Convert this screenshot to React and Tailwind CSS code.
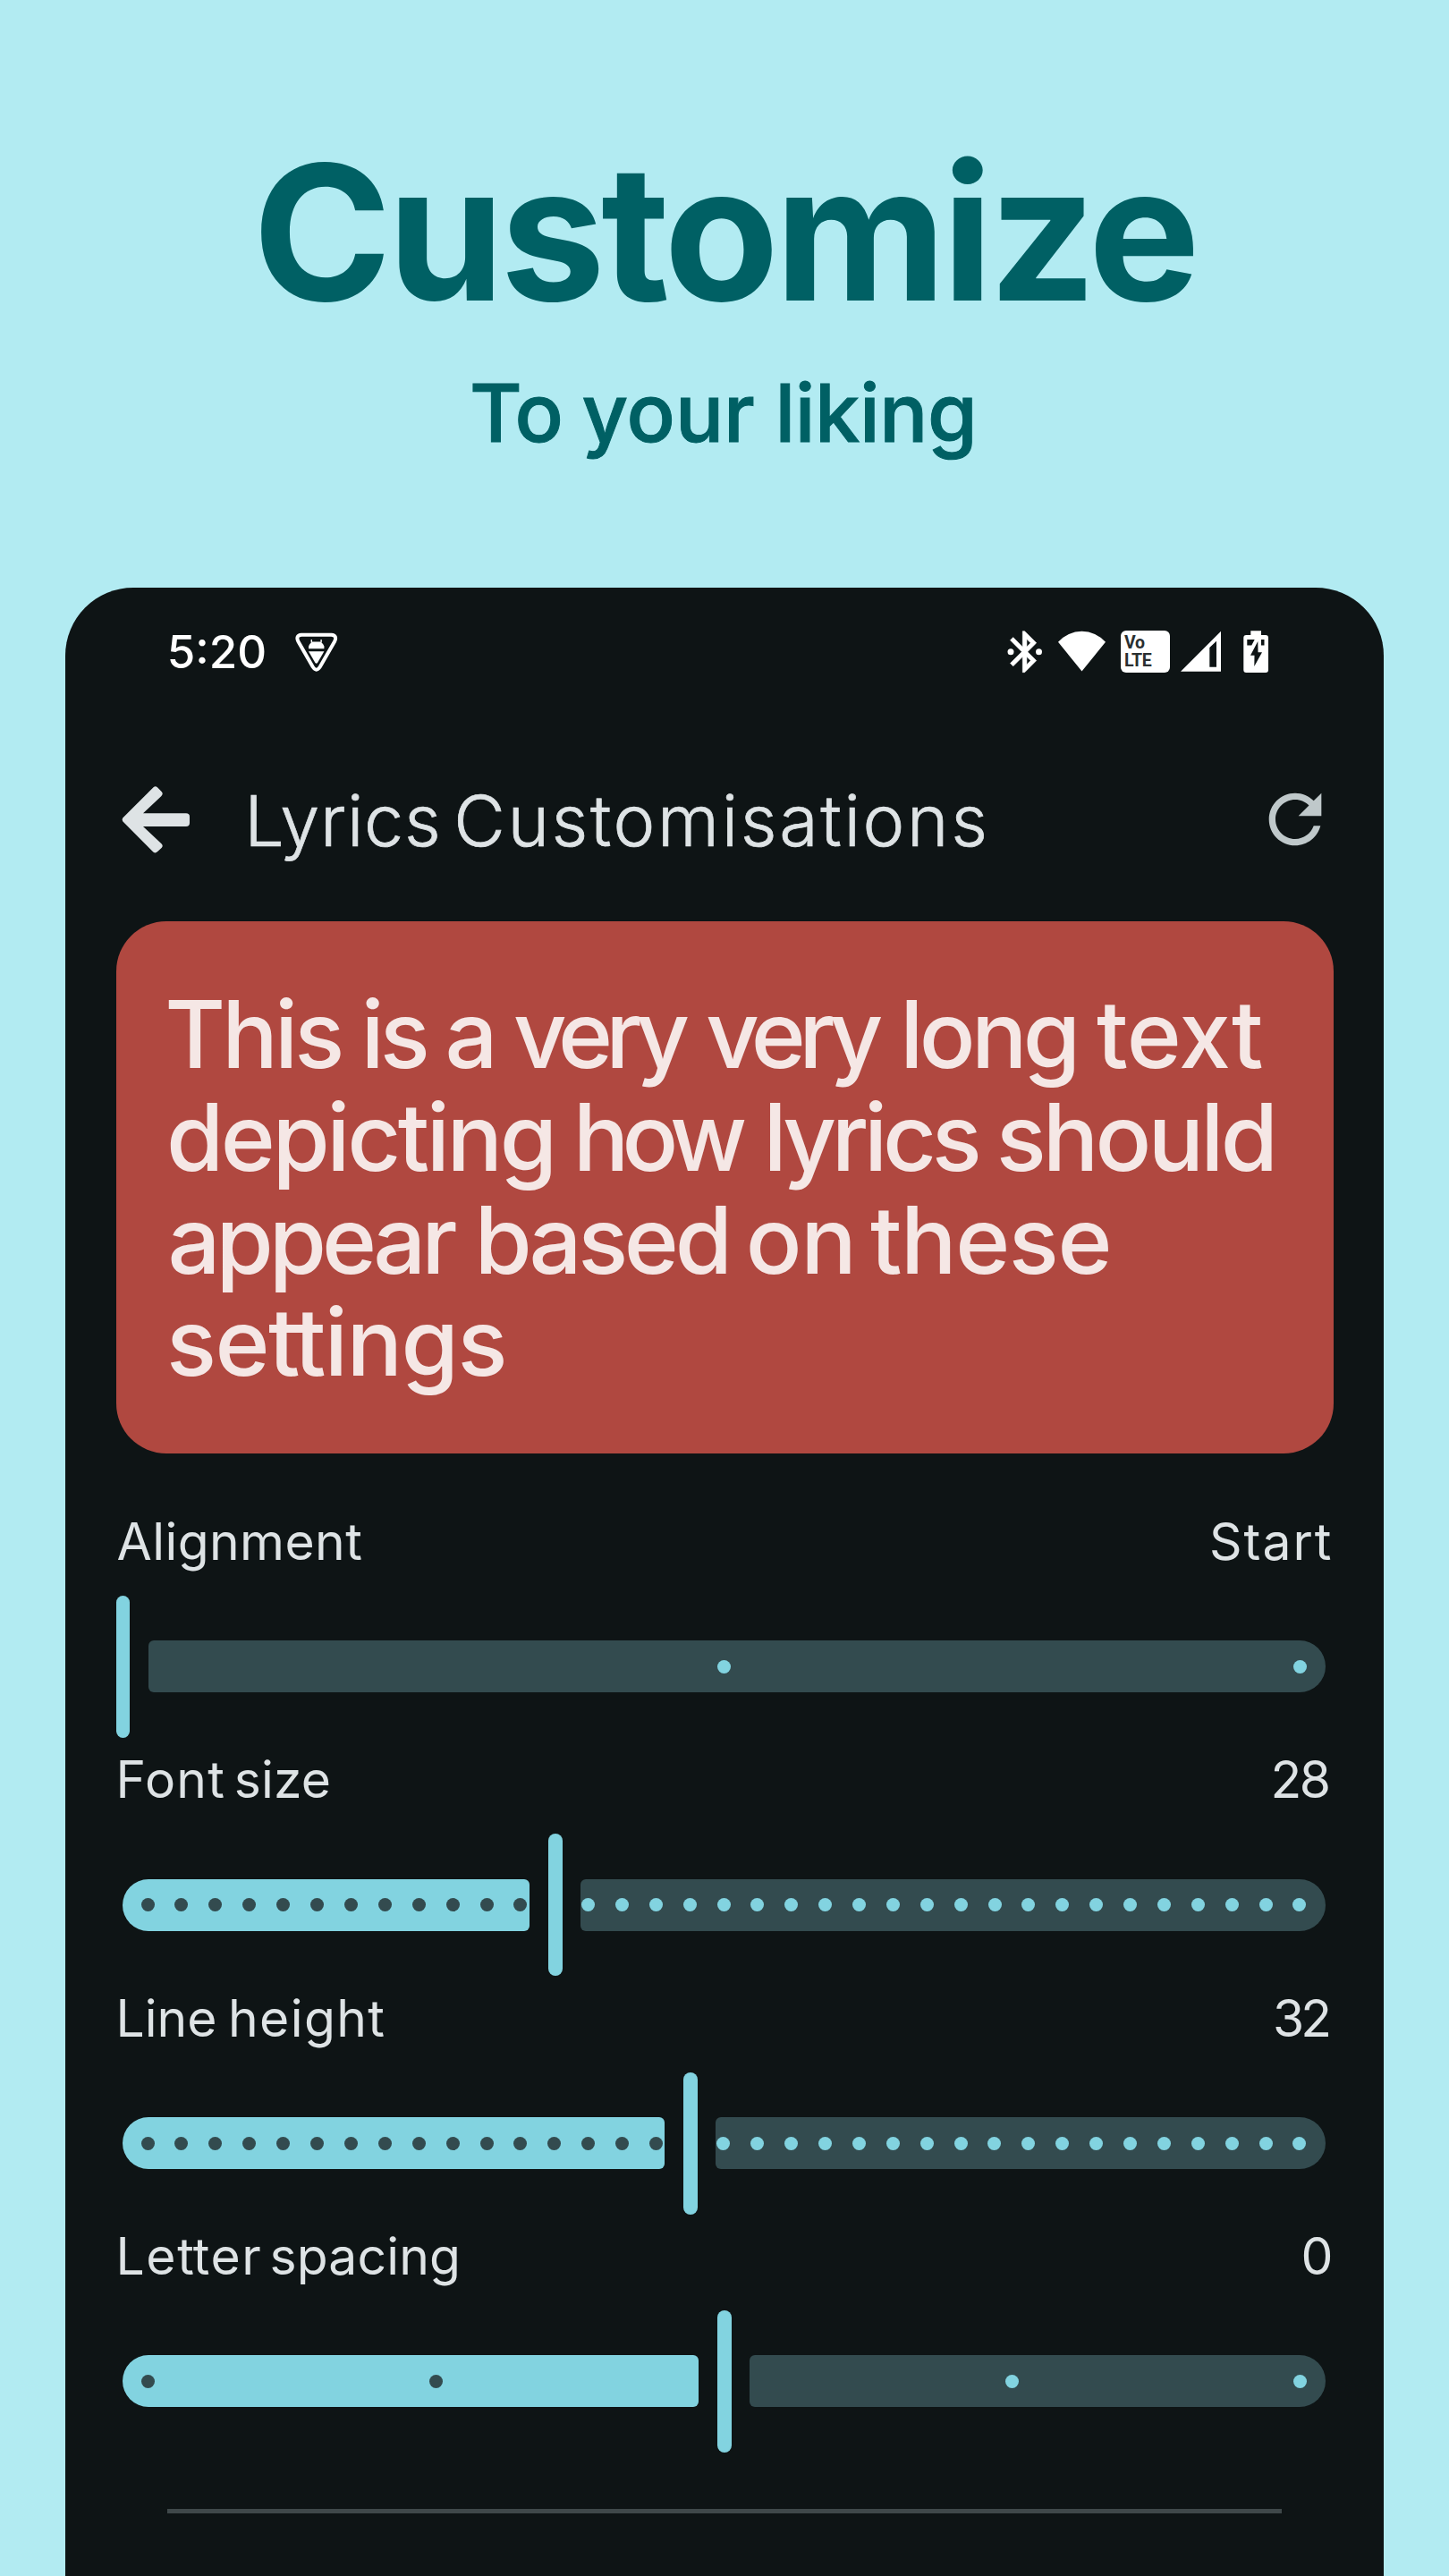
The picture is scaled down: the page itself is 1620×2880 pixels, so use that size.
import React from "react";

/* ---------- Status bar icons ---------- */

function ShieldIcon() {
  return (
    <svg className="ml-[31px] h-[50px] w-[50px] shrink-0" viewBox="0 0 50 50" fill="none">
      <path
        d="M8 5.800H41.500Q48.200 6.500 45.200 13L28.800 41.500Q24.700 47.800 20.700 41.500L4.300 13Q1.300 6.500 8 5.800Z"
        stroke="#fff"
        strokeWidth="4"
        strokeLinejoin="round"
      />
      <path d="M19.300 11V14.500M30.100 11V14.500" stroke="#fff" strokeWidth="1.400" />
      <path d="M16 21.300V18.500Q17 15.800 20 13.600H29.400Q32.400 15.800 33.400 18.500V21.300Z" fill="#fff" />
      <path d="M16 24.300H33.400L26 37Q24.700 38.500 23.400 37Z" fill="#fff" />
    </svg>
  );
}

function BluetoothIcon() {
  return (
    <svg className="h-[50px] w-[42px] shrink-0" viewBox="0 0 42 50" fill="#fff">
      <path
        transform="translate(-7 -2.900) scale(2.300)"
        fillRule="evenodd"
        stroke="#fff"
        strokeWidth="0.250"
        d="M17.710 7.710L12 2h-1v7.590L6.410 5 5 6.410 10.590 12 5 17.590 6.410 19 11 14.410V22h1l5.710-5.710-4.300-4.290 4.300-4.290zM13 5.830l1.880 1.880L13 9.590V5.830zm1.880 10.460L13 18.170v-3.760l1.880 1.880z"
      />
      <circle cx="5" cy="24.700" r="3.500" />
      <circle cx="36.500" cy="24.700" r="3.500" />
    </svg>
  );
}

function WifiIcon() {
  return (
    <svg className="ml-[15px] h-[50px] w-[55px] shrink-0" viewBox="0 0 55 50" fill="#fff">
      <path d="M1 13.800A35.100 35.100 0 0 1 54 13.800L27.500 46.500Z" />
    </svg>
  );
}

function VolteBadge() {
  return (
    <div className="mt-[1px] ml-[15.5px] flex h-[47.5px] w-[55px] shrink-0 flex-col gap-[3px] rounded-[6px] bg-white pt-[5px] pl-[4.5px] font-['Roboto',sans-serif] text-[19.5px] leading-[17px] font-bold tracking-[-0.3px] text-[#2a2f30]">
      <div>Vo</div>
      <div>LTE</div>
    </div>
  );
}

function SignalIcon() {
  return (
    <svg className="ml-[11.5px] h-[50px] w-[48px] shrink-0" viewBox="0 0 48 50" fill="#fff">
      <path fillRule="evenodd" d="M1 46.700L46 1.700V46.700ZM33.300 20V41.700H41V12.700Z" />
    </svg>
  );
}

function BatteryIcon() {
  return (
    <svg className="ml-[22px] h-[50px] w-[30px] shrink-0" viewBox="0 0 30 50">
      <path
        fill="#fff"
        d="M9.300 1.300H21V6H26Q29 6 29 9V45Q29 48 26 48H4.300Q1.300 48 1.300 45V9Q1.300 6 4.300 6H9.300Z"
      />
      <path
        fill="#0e1415"
        d="M17.300 13L9 28.700H13.500L13.300 41L22 25.300H17.500ZM5.300 11H13.700L10.300 17.500H5.300ZM21 11H24.500V17.500H21Z"
      />
    </svg>
  );
}

/* ---------- App bar icons ---------- */

function BackArrow() {
  return (
    <svg className="h-[80px] w-[78px] shrink-0" viewBox="0 0 78 80" fill="#dee3e5">
      <path d="M1.200 37.500L34.500 4.200Q37.300 0.800 40.200 3.600L44.600 8Q47 10.500 44.200 13.200L24 32.300H72Q76 32.300 76 36V43Q76 47 72 47H24L44.200 66Q47 68.500 44.600 71L40.200 75Q37.300 78 34.500 74.800L1.200 41.200Q0 39.300 1.200 37.500Z" />
    </svg>
  );
}

function RefreshIcon() {
  return (
    <svg className="-mt-[4.5px] ml-auto h-[88px] w-[88px] shrink-0" viewBox="0 0 24 24" fill="#bfc8ca">
      <path d="M17.650 6.350C16.200 4.900 14.210 4 12 4c-4.420 0-7.990 3.580-7.990 8s3.570 8 7.990 8c3.730 0 6.840-2.550 7.730-6h-2.080c-.820 2.330-3.040 4-5.650 4-3.310 0-6-2.690-6-6s2.690-6 6-6c1.660 0 3.140.690 4.220 1.780L13 11h7V4l-2.350 2.350z" />
    </svg>
  );
}

/* ---------- Sliders ---------- */

function Dots({ count, color }) {
  return Array.from({ length: count }, (_, i) => (
    <span key={i} className={"size-[15px] shrink-0 rounded-full " + color} />
  ));
}

function Slider({ label, value, active, inactive }) {
  return (
    <section className="h-[266.35px]">
      <div className="flex h-[60px] justify-between text-[57px] leading-[60px] text-[#dee3e5]">
        <div className="flex">{label}</div>
        {value}
      </div>
      <div className="mt-[30px] flex h-[159px] items-center">
        {active && (
          <div
            className={
              "ml-[7px] mr-[21.5px] flex h-[58px] shrink-0 items-center justify-between rounded-l-[29px] rounded-r-[6px] bg-[#82d3e0] pl-[21px] " +
              active.box
            }
          >
            <Dots count={active.dots} color="bg-[#334b4f]" />
          </div>
        )}
        <div className="h-full w-[15.5px] shrink-0 rounded-full bg-[#82d3e0]" />
        <div
          className={
            "mr-[8.5px] ml-[20.5px] flex h-[58px] flex-1 items-center justify-between rounded-l-[6px] rounded-r-[29px] bg-[#334b4f] pr-[21.5px] " +
            inactive.box
          }
        >
          <Dots count={inactive.dots} color="bg-[#82d3e0]" />
        </div>
      </div>
    </section>
  );
}

export default function App() {
  return (
    <div className="flex h-[2880px] w-[1620px] flex-col overflow-hidden bg-[#b2ebf2] font-['Inter',sans-serif] whitespace-nowrap">
      <h1 className="mt-[155px] pl-[282.5px] text-[210px] leading-[210px] font-bold tracking-[-4.7px] text-[#006064]">
        Customize
      </h1>
      <h2 className="mt-[52px] flex pl-[525px] text-[90px] leading-[90px] font-medium text-[#006064] [-webkit-text-stroke:1px_#006064]">
        <span className="tracking-[-1.3px]">To</span>
        <span className="ml-[22px]">your</span>
        <span className="ml-[22.7px] tracking-[-0.4px]">liking</span>
      </h2>

      <main className="mt-[149.6px] ml-[73px] w-[1474px] flex-1 rounded-t-[76px] bg-[#0e1415]">
        {/* status bar */}
        <div className="flex items-start pt-[47.4px] pr-[128px] pl-[113.8px]">
          <span className="text-[51px] leading-[50px] font-medium text-white">5:20</span>
          <ShieldIcon />
          <div className="flex-1" />
          <BluetoothIcon />
          <WifiIcon />
          <VolteBadge />
          <SignalIcon />
          <BatteryIcon />
        </div>

        {/* app bar */}
        <header className="mt-[123px] flex h-[80px] items-start pr-[55.4px] pl-[63px]">
          <BackArrow />
          <div className="ml-[59.3px] flex text-[79px] leading-[80px] font-light text-[#dee3e5] [-webkit-text-stroke:0.7px_#dee3e5]">
            <span className="tracking-[0.74px]">Lyrics</span>
            <span className="ml-[13.8px] tracking-[2.65px]">Customisations</span>
          </div>
          <RefreshIcon />
        </header>

        {/* lyrics preview */}
        <div className="mt-[73px] ml-[56.7px] h-[595.5px] w-[1361px] rounded-[56px] bg-[#b04840] pt-[69.3px] text-[104px] leading-[114.7px] font-medium text-[#f5e7e5]">
          <div className="flex pl-[54.6px]">
            <span className="tracking-[-3.87px]">This</span>
            <span className="ml-[22px] tracking-[-4.83px]">is</span>
            <span className="ml-[21.4px]">a</span>
            <span className="ml-[17.5px] tracking-[-7.8px]">very</span>
            <span className="ml-[26px] tracking-[-7.5px]">very</span>
            <span className="ml-[26.3px] tracking-[-4.66px]">long</span>
            <span className="ml-[22.5px] tracking-[-0.71px]">text</span>
          </div>
          <div className="flex pl-[56.2px]">
            <span className="tracking-[-3.4px]">depicting</span>
            <span className="ml-[20.9px] tracking-[-7.68px]">how</span>
            <span className="ml-[26px] tracking-[-5.26px]">lyrics</span>
            <span className="ml-[21.2px] tracking-[-3.81px]">should</span>
          </div>
          <div className="flex pl-[57.8px]">
            <span className="tracking-[-5px]">appear</span>
            <span className="ml-[23.9px] tracking-[-4.31px]">based</span>
            <span className="ml-[19px] tracking-[-1.19px]">on</span>
            <span className="ml-[16.3px] tracking-[-1.41px]">these</span>
          </div>
          <div className="pl-[56.2px] tracking-[-1.5px]">
            se<span className="tracking-[-6.5px]">t</span>tings
          </div>
        </div>

        {/* settings */}
        <div className="mt-[68.4px] ml-[56.5px] w-[1361px]">
          <Slider
            label={<span className="ml-[1px] tracking-[0.41px]">Alignment</span>}
            value={<span className="tracking-[2px]">Start</span>}
            inactive={{ dots: 2, box: "pl-[636.2px]" }}
          />
          <Slider
            label={
              <>
                <span className="tracking-[1.13px]">Font</span>
                <span className="ml-[9.8px] tracking-[0.16px]">size</span>
              </>
            }
            value={<span className="mr-[5px] tracking-[-2.56px]">28</span>}
            active={{ dots: 12, box: "w-[455px] pr-[1.9px]" }}
            inactive={{ dots: 22, box: "pl-[1.1px]" }}
          />
          <Slider
            label={
              <>
                <span>Line</span>
                <span className="ml-[12.5px] tracking-[1.4px]">height</span>
              </>
            }
            value={<span className="mr-[5.5px] tracking-[-4px]">32</span>}
            active={{ dots: 16, box: "w-[606.3px] pr-[1.6px]" }}
            inactive={{ dots: 18, box: "pl-[1px]" }}
          />
          <Slider
            label={
              <>
                <span className="tracking-[1.6px]">
                  Le<span className="tracking-[-1px]">t</span>ter
                </span>
                <span className="ml-[8px] tracking-[0.17px]">spacing</span>
              </>
            }
            value={<span>0</span>}
            active={{ dots: 2, box: "w-[644.3px] pr-[286.3px]" }}
            inactive={{ dots: 2, box: "pl-[285.3px]" }}
          />
        </div>

        <div className="mt-[45.9px] ml-[114px] h-[4.5px] w-[1246px] bg-[#3f484a]" />
      </main>
    </div>
  );
}
